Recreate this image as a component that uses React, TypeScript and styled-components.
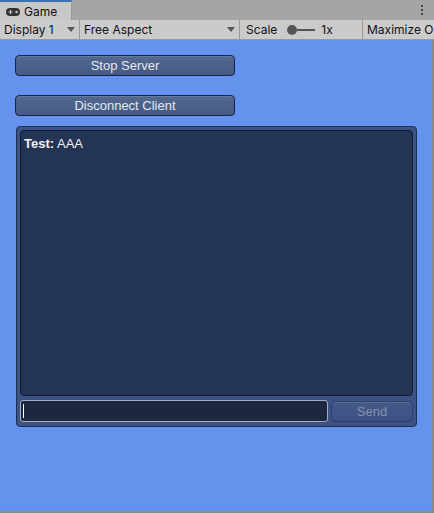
import React from "react";
import styled, { createGlobalStyle } from "styled-components";

const Global = createGlobalStyle`
  html, body { margin: 0; padding: 0; background: #a2a2a2; }
  body { width: 434px; height: 513px; overflow: hidden; font-family: Inter, "Noto Sans", sans-serif; }
  * { box-sizing: border-box; }
`;

const Window = styled.div`
  width: 434px;
  height: 513px;
  display: flex;
  flex-direction: column;
  background: #a5a5a5;
`;

const TabBar = styled.div`
  height: 20px;
  display: flex;
  align-items: stretch;
  background: #a5a5a5;
  position: relative;
`;

const Tab = styled.div`
  width: 72px;
  display: flex;
  align-items: center;
  gap: 4px;
  padding: 1px 0 0 6px;
  background: #c8c8c8;
  border-top: 2px solid #3a72b0;
  border-right: 1px solid #999;
  font-size: 12px;
  color: #111;
`;

const MenuDots = styled.div`
  position: absolute;
  right: 11px;
  top: 5px;
  display: flex;
  flex-direction: column;
  gap: 2px;
  & > span { width: 2px; height: 2px; background: #444; display: block; }
`;

const Toolbar = styled.div`
  height: 20px;
  display: flex;
  align-items: stretch;
  background: #cbcbcb;
  border-bottom: 1px solid #999;
  font-size: 12px;
  color: #111;
  white-space: nowrap;
  overflow: hidden;
`;

const ToolItem = styled.div<{ $w: number }>`
  width: ${(p) => p.$w}px;
  flex: none;
  display: flex;
  align-items: center;
  padding: 0 4px;
  border-right: 1px solid #999;
  gap: 6px;
  overflow: hidden;
`;

const Grow = styled.span`
  flex: 1;
`;

const Arrow = styled.span`
  width: 0;
  height: 0;
  border-left: 4px solid transparent;
  border-right: 4px solid transparent;
  border-top: 5px solid #555;
`;

const Slider = styled.span`
  display: flex;
  align-items: center;
  width: 28px;
  margin-left: 4px;
  & > i { width: 10px; height: 10px; border-radius: 50%; background: #555; display: block; flex: none; }
  & > b { flex: 1; height: 2px; background: #555; display: block; }
`;

const GameView = styled.div`
  flex: 1;
  background: #6592ec;
  border-right: 2px solid #8a8a8a;
  border-bottom: 2px solid #8a8a8a;
  padding: 15px 0 0 15px;
  display: flex;
  flex-direction: column;
  font-family: "Liberation Sans", Arial, sans-serif;
`;

const ButtonStack = styled.div`
  display: flex;
  flex-direction: column;
  gap: 19px;
  margin-bottom: 10px;
`;

const GuiButton = styled.div<{ $disabled?: boolean }>`
  width: ${(p) => (p.$disabled ? 82 : 220)}px;
  height: 21px;
  flex: none;
  display: flex;
  align-items: center;
  justify-content: center;
  font-size: 13px;
  color: ${(p) => (p.$disabled ? "#8592ab" : "#e4e8f0")};
  background: ${(p) =>
    p.$disabled ? "linear-gradient(#44598a, #3b5282)" : "linear-gradient(#53698f, #445a84)"};
  border: 1px solid ${(p) => (p.$disabled ? "#2c3f66" : "#17254a")};
  border-radius: 4px;
  box-shadow: inset 0 1px 0 rgba(255, 255, 255, 0.12);
`;

const ChatBox = styled.div`
  width: 401px;
  height: 301px;
  margin-left: 1px;
  background: #3b5485;
  border: 1px solid #1f2f54;
  border-radius: 4px;
  padding: 3px 3px 4px 3px;
  display: flex;
  flex-direction: column;
  gap: 4px;
`;

const Log = styled.div`
  flex: 1;
  background: #243455;
  border: 1px solid #121c33;
  border-radius: 4px;
  padding: 5px 3px;
  font-size: 13px;
  color: #eef0f5;
  line-height: 15px;
`;

const InputRow = styled.div`
  height: 22px;
  display: flex;
  gap: 3px;
  align-items: center;
`;

const Input = styled.div`
  flex: 1;
  height: 22px;
  background: #1c2740;
  border: 1px solid #a3adc0;
  border-radius: 3px;
  padding: 3px 2px;
  display: flex;
  & > span { width: 1px; height: 100%; background: #fff; display: block; }
`;

export default function App() {
  return (
    <>
      <Global />
      <Window>
        <TabBar>
          <Tab>
            <svg width="14" height="8" viewBox="0 0 14 8">
              <rect x="0" y="0" width="14" height="8" rx="4" fill="#333" />
              <rect x="2.5" y="3.5" width="4" height="1" fill="#ccc" />
              <rect x="4" y="2" width="1" height="4" fill="#ccc" />
              <circle cx="10.5" cy="4" r="1.2" fill="#ccc" />
            </svg>
            Game
          </Tab>
          <MenuDots>
            <span />
            <span />
            <span />
          </MenuDots>
        </TabBar>
        <Toolbar>
          <ToolItem $w={80}>
            <Grow>Display 1</Grow>
            <Arrow />
          </ToolItem>
          <ToolItem $w={160}>
            <Grow>Free Aspect</Grow>
            <Arrow />
          </ToolItem>
          <ToolItem $w={123}>
            <span style={{ marginLeft: 2 }}>Scale</span>
            <Slider>
              <i />
              <b />
            </Slider>
            <span>1x</span>
          </ToolItem>
          <ToolItem $w={80}>Maximize On Play</ToolItem>
        </Toolbar>
        <GameView>
          <ButtonStack>
            <GuiButton>Stop Server</GuiButton>
            <GuiButton>Disconnect Client</GuiButton>
          </ButtonStack>
          <ChatBox>
            <Log>
              <b>Test:</b> AAA
            </Log>
            <InputRow>
              <Input>
                <span />
              </Input>
              <GuiButton $disabled>Send</GuiButton>
            </InputRow>
          </ChatBox>
        </GameView>
      </Window>
    </>
  );
}
